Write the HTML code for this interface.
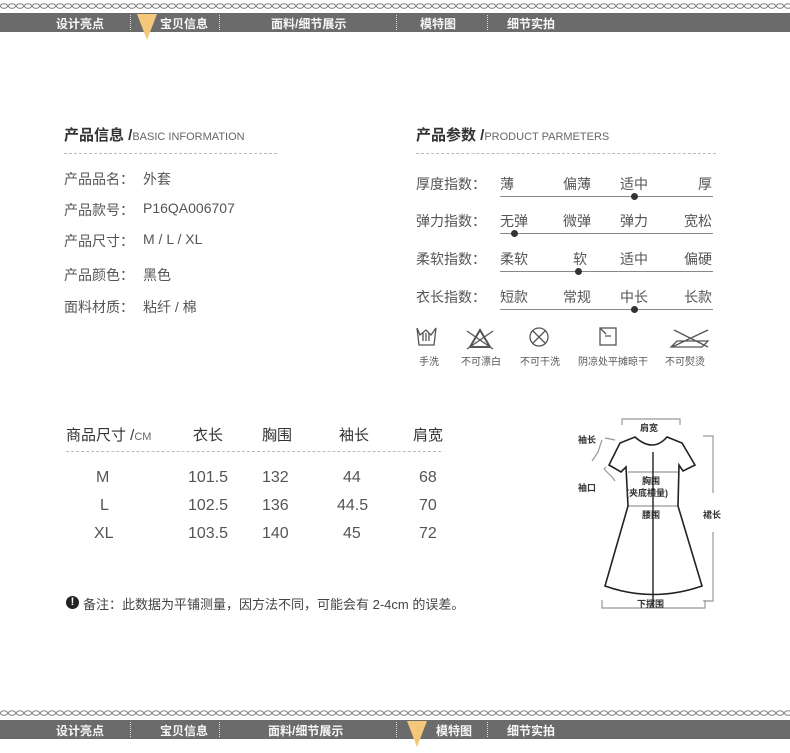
<!DOCTYPE html>
<html><head><meta charset="utf-8"><style>
body{margin:0;width:790px;height:753px;background:#fff;position:relative;overflow:hidden;font-family:"Liberation Sans","Noto Sans CJK SC",sans-serif;color:#555}
.a{position:absolute;white-space:nowrap}
.bar{position:absolute;left:0;width:790px;height:19px;background:#6b6b6b}
.bar span{position:absolute;top:2px;color:#fff;font-size:12px;font-weight:bold;opacity:.95}
.bar i{position:absolute;top:2px;height:15px;border-left:1px dotted #ddd}
.tri{position:absolute;width:0;height:0;border-left:10px solid transparent;border-right:10px solid transparent;border-top:26px solid #f5c77a}
.lbl{font-size:14px;color:#555}
.ln{position:absolute;left:500px;width:213px;height:1px;background:#888}
.dot{position:absolute;width:7px;height:7px;border-radius:50%;background:#333}
.op{position:absolute;font-size:14px;color:#555}
.num{position:absolute;font-size:16px;color:#555}
</style></head><body>
<svg class="a" style="left:0;top:2px" width="790" height="8"><defs><pattern id="c" width="8" height="8" patternUnits="userSpaceOnUse"><ellipse cx="4" cy="4" rx="3.5" ry="2.3" fill="none" stroke="#777" stroke-width="1"/></pattern></defs><rect width="790" height="8" fill="url(#c)"/></svg>
<div class="bar" style="top:13px">
<span style="left:56px">设计亮点</span><i style="left:130px"></i>
<span style="left:160px">宝贝信息</span><i style="left:219px"></i>
<span style="left:271px">面料/细节展示</span><i style="left:396px"></i>
<span style="left:420px">模特图</span><i style="left:487px"></i>
<span style="left:507px">细节实拍</span></div>
<div class="tri" style="left:137px;top:14px"></div>

<svg class="a" style="left:0;top:709px" width="790" height="8"><rect width="790" height="8" fill="url(#c)"/></svg>
<div class="bar" style="top:720px">
<span style="left:56px">设计亮点</span><i style="left:130px"></i>
<span style="left:160px">宝贝信息</span><i style="left:219px"></i>
<span style="left:268px">面料/细节展示</span><i style="left:396px"></i>
<span style="left:436px">模特图</span><i style="left:487px"></i>
<span style="left:507px">细节实拍</span></div>
<div class="tri" style="left:407px;top:721px"></div>

<div class="a" style="left:64px;top:124px;font-size:15px;font-weight:bold;color:#333">产品信息 /<span style="font-size:11px;font-weight:normal;color:#666">BASIC INFORMATION</span></div>
<div class="a" style="left:64px;top:153px;width:213px;border-top:1px dashed #bbb"></div>
<div class="a lbl" style="left:64px;top:169px">产品品名：</div><div class="a lbl" style="left:143px;top:169px">外套</div>
<div class="a lbl" style="left:64px;top:200px">产品款号：</div><div class="a lbl" style="left:143px;top:200px">P16QA006707</div>
<div class="a lbl" style="left:64px;top:231px">产品尺寸：</div><div class="a lbl" style="left:143px;top:231px">M / L / XL</div>
<div class="a lbl" style="left:64px;top:265px">产品颜色：</div><div class="a lbl" style="left:143px;top:265px">黑色</div>
<div class="a lbl" style="left:64px;top:297px">面料材质：</div><div class="a lbl" style="left:143px;top:297px">粘纤 / 棉</div>

<div class="a" style="left:416px;top:124px;font-size:15px;font-weight:bold;color:#333">产品参数 /<span style="font-size:11px;font-weight:normal;color:#666">PRODUCT PARMETERS</span></div>
<div class="a" style="left:416px;top:153px;width:300px;border-top:1px dashed #bbb"></div>

<div class="a lbl" style="left:416px;top:174px">厚度指数：</div>
<div class="op" style="left:500px;top:174px">薄</div><div class="op" style="left:563px;top:174px">偏薄</div><div class="op" style="left:620px;top:174px">适中</div><div class="op" style="left:698px;top:174px">厚</div>
<div class="ln" style="top:196px"></div><div class="dot" style="left:631px;top:193px"></div>

<div class="a lbl" style="left:416px;top:211px">弹力指数：</div>
<div class="op" style="left:500px;top:211px">无弹</div><div class="op" style="left:563px;top:211px">微弹</div><div class="op" style="left:620px;top:211px">弹力</div><div class="op" style="left:684px;top:211px">宽松</div>
<div class="ln" style="top:233px"></div><div class="dot" style="left:511px;top:230px"></div>

<div class="a lbl" style="left:416px;top:249px">柔软指数：</div>
<div class="op" style="left:500px;top:249px">柔软</div><div class="op" style="left:573px;top:249px">软</div><div class="op" style="left:620px;top:249px">适中</div><div class="op" style="left:684px;top:249px">偏硬</div>
<div class="ln" style="top:271px"></div><div class="dot" style="left:575px;top:268px"></div>

<div class="a lbl" style="left:416px;top:287px">衣长指数：</div>
<div class="op" style="left:500px;top:287px">短款</div><div class="op" style="left:563px;top:287px">常规</div><div class="op" style="left:620px;top:287px">中长</div><div class="op" style="left:684px;top:287px">长款</div>
<div class="ln" style="top:309px"></div><div class="dot" style="left:631px;top:306px"></div>

<svg class="a" style="left:410px;top:325px" width="310" height="28" fill="none" stroke="#555" stroke-width="1.3">
<path d="M7 3 L10 10 L16 5 L21 10 L26 3 L24 20 L9 20 Z"/><path d="M13 8 L13 16 M16 8 L16 16 M19 8 L19 16"/>
<path d="M60 22 L70 5 L80 22 Z" stroke-width="2"/><path d="M57 6 L83 24 M83 6 L57 24"/>
<circle cx="129" cy="12" r="9"/><path d="M123 6 L135 18 M135 6 L123 18"/>
<rect x="190" y="3" width="16" height="17"/><path d="M195 11 L201 11 M190 3 L196 9"/>
<path d="M267 16 L298 16 L292 22 L261 22 Z M264 5 L298 22 M298 5 L262 22"/>
</svg>
<div class="a" style="left:419px;top:353px;font-size:10px">手洗</div>
<div class="a" style="left:461px;top:353px;font-size:10px">不可漂白</div>
<div class="a" style="left:520px;top:353px;font-size:10px">不可干洗</div>
<div class="a" style="left:578px;top:353px;font-size:10px">阴凉处平摊晾干</div>
<div class="a" style="left:665px;top:353px;font-size:10px">不可熨烫</div>

<div class="a" style="left:66px;top:424px;font-size:15px;color:#333">商品尺寸 /<span style="font-size:11px;color:#666">CM</span></div>
<div class="a" style="left:193px;top:424px;font-size:15px;color:#333">衣长</div>
<div class="a" style="left:262px;top:424px;font-size:15px;color:#333">胸围</div>
<div class="a" style="left:339px;top:424px;font-size:15px;color:#333">袖长</div>
<div class="a" style="left:413px;top:424px;font-size:15px;color:#333">肩宽</div>
<div class="a" style="left:66px;top:451px;width:375px;border-top:1px dashed #bbb"></div>
<div class="num" style="left:96px;top:469px">M</div><div class="num" style="left:188px;top:469px">101.5</div><div class="num" style="left:262px;top:469px">132</div><div class="num" style="left:343px;top:469px">44</div><div class="num" style="left:419px;top:469px">68</div>
<div class="num" style="left:100px;top:497px">L</div><div class="num" style="left:188px;top:497px">102.5</div><div class="num" style="left:262px;top:497px">136</div><div class="num" style="left:337px;top:497px">44.5</div><div class="num" style="left:419px;top:497px">70</div>
<div class="num" style="left:94px;top:525px">XL</div><div class="num" style="left:188px;top:525px">103.5</div><div class="num" style="left:262px;top:525px">140</div><div class="num" style="left:343px;top:525px">45</div><div class="num" style="left:419px;top:525px">72</div>
<div class="a" style="left:66px;top:596px;width:13px;height:13px;border-radius:50%;background:#222;color:#fff;font-size:11px;font-weight:bold;text-align:center;line-height:13px">!</div>
<div class="a" style="left:83px;top:594px;font-size:13px;color:#444">备注：此数据为平铺测量，因方法不同，可能会有 2-4cm 的误差。</div>

<svg class="a" style="left:570px;top:405px" width="160" height="210" fill="none">
<g stroke="#999" stroke-width="1.2">
<path d="M52 20 L52 14 L110 14 L110 20"/><path d="M133 31 L143 31 L143 88 M143 127 L143 196 L133 196"/>
<path d="M28 47 L32 35 M28 47 L22 56 M45 35 L35 33"/>
<path d="M34 64 L38 68 L42 72 L45 76 M34 64 L36 62"/>
<path d="M32 195 L32 203 L135 203 L135 195"/>
<path d="M58 67 L108 67 M58 101 L108 101"/>
</g>
<path d="M65 32 Q83 48 97 32 L112 38 L125 60 L113 66 L109 60 L108 101 L132 181 Q83 198 35 181 L58 101 L56 62 L51 67 L39 60 L50 38 Z" stroke="#222" stroke-width="1.6"/>
<path d="M83 47 L83 202" stroke="#222" stroke-width="1.4"/>
<g fill="#333" font-size="9" font-weight="bold" font-family="Liberation Sans,Noto Sans CJK SC,sans-serif">
<text x="70" y="26">肩宽</text><text x="8" y="38">袖长</text><text x="8" y="86">袖口</text>
<text x="72" y="79">胸围</text><text x="56" y="91">(夹底横量)</text><text x="72" y="113">腰围</text>
<text x="133" y="113">裙长</text><text x="67" y="202">下摆围</text></g>
</svg>
</body></html>
